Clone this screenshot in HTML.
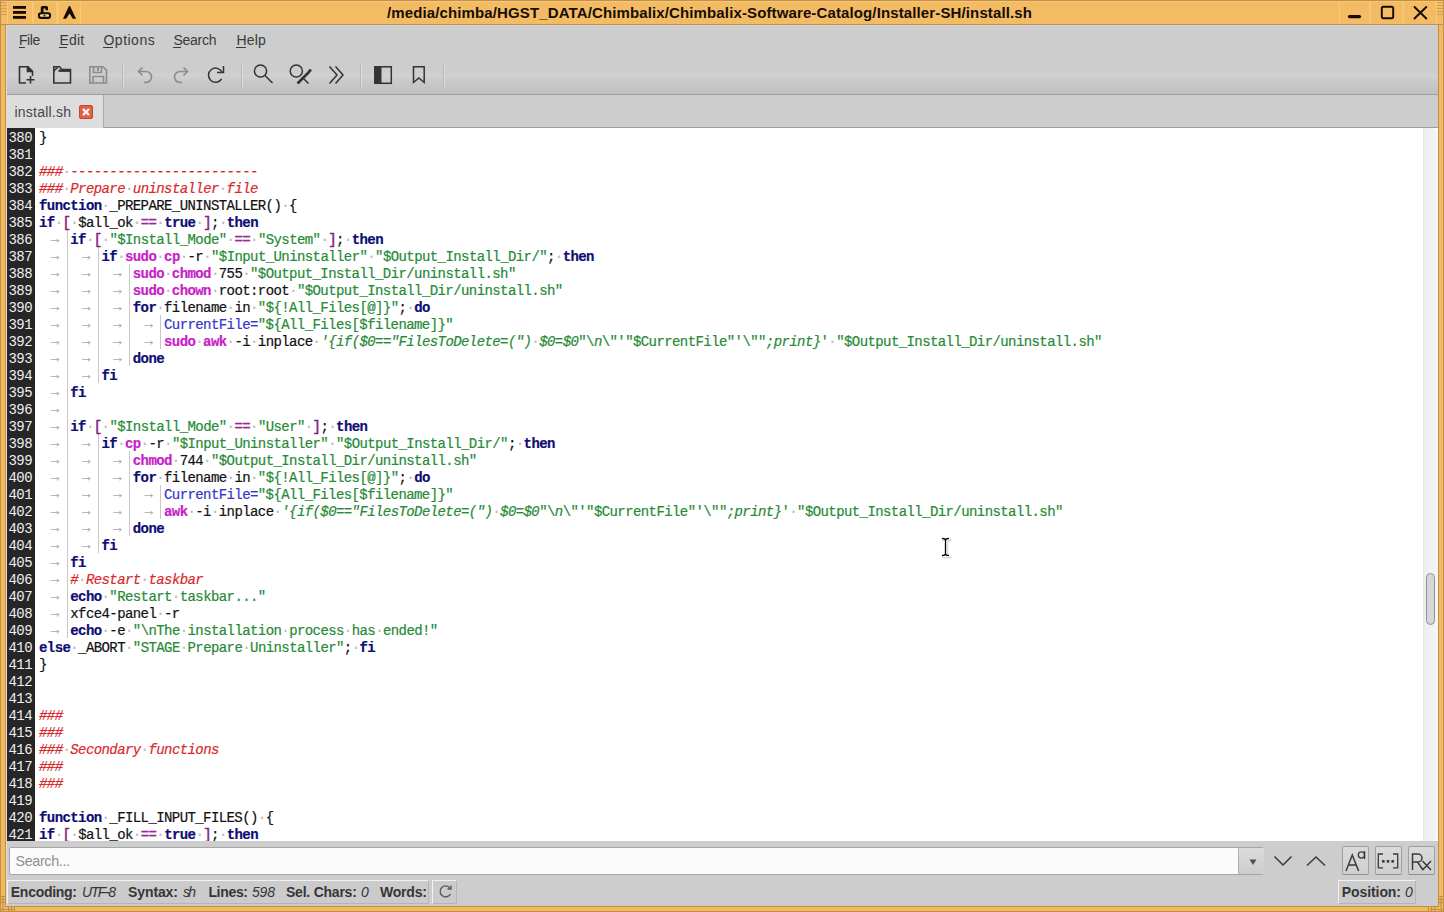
<!DOCTYPE html>
<html><head><meta charset="utf-8">
<style>
*{margin:0;padding:0;box-sizing:border-box}
html,body{width:1444px;height:912px;overflow:hidden;background:#f1b962;font-family:"Liberation Sans",sans-serif}
.abs{position:absolute}
#title{left:0;top:0;width:1444px;height:25px;background:#f2bb64;border-top:1px solid #b8862f;border-bottom:1px solid #c0913f}
#ttext{left:387px;top:4px;white-space:nowrap;font-weight:bold;font-size:15.3px;color:#140c05;}
#win{left:6px;top:25px;width:1432px;height:881px;background:#cdcdcd}
#menubar{left:6px;top:25px;width:1432px;height:30px;background:#cdcdcd}
.menu{position:absolute;top:32px;font-size:14px;letter-spacing:0.5px;color:#3a3a3a}
.menu u{text-decoration:none;border-bottom:1px solid #3a3a3a}
#toolbar{left:6px;top:55px;width:1432px;height:40px;background:linear-gradient(#cdcdcd 0,#cdcdcd 45%,#d1d1d1 50%,#c9c9c9 70%,#c0c0c0 100%);border-bottom:1px solid #9f9f9f}
.sep{position:absolute;top:63px;width:1px;height:25px;background:#bababa;box-shadow:1px 0 0 #dadada}
#tabbar{left:6px;top:95px;width:1432px;height:33px;background:#cdcdcd;border-bottom:1px solid #9c9c9c}
#tab{left:6px;top:95px;width:98px;height:33px;background:#dddddd;border-right:1px solid #a9a9a9}
#tabtxt{left:14px;top:102px;font-size:15px;letter-spacing:0.35px;color:#454545}
#tabx{left:79px;top:105px;width:14px;height:14px;background:#df6347;border-radius:2px;border:1px solid #c04a30}
#editor{left:6px;top:128px;width:1432px;height:713px;background:#fff}
#gutter{left:6px;top:128px;width:29px;height:713px;background:#262626}
.gn{position:absolute;margin-top:1.5px;left:6px;width:26px;text-align:right;height:17px;line-height:17px;font-family:"Liberation Mono",monospace;font-size:14px;letter-spacing:-0.5875px;color:#eee}
.ln{position:absolute;margin-top:1.5px;left:39px;height:17px;line-height:17px;white-space:pre;font-family:"Liberation Mono",monospace;font-size:14px;letter-spacing:-0.5875px;color:#111;-webkit-text-stroke:0.2px}
.tb{display:inline-block;width:31.25px;text-align:center;color:#aaa;position:relative;top:-1px}
.sp{color:#bbb}
.k{color:#0d0d73;font-weight:bold}
.c{color:#c81ec8;font-weight:bold}
.s{color:#268a36}
.si{color:#268a36;font-style:italic}
.m{color:#d82a2a;font-style:italic}
.p{color:#84207c;-webkit-text-stroke:0.5px}
.e{color:#9c2696;-webkit-text-stroke:0.4px}
.v{color:#3535c8}
.n{color:#111}
.gd{position:absolute;width:1px;background:#c8c8c8}
#vscroll{left:1423px;top:128px;width:15px;height:713px;background:linear-gradient(90deg,#e6e6e6 0,#e6e6e6 1px,#eceeee 1px,#eef2f2 40%,#f6eef6 60%,#f0f8f2 85%,#f8f8f8);border-radius:0 6px 6px 0}
#thumb{left:1426px;top:573px;width:9px;height:52px;border:1px solid #8c9496;border-radius:5px;background:#d9d5d9}
#searchbar{left:6px;top:841px;width:1432px;height:38px;background:#cdcdcd}
#sinput{left:9px;top:847px;width:1255px;height:28px;background:#fbfbfb;border:1px solid #a6a6a6;border-radius:2px}
#sdrop{left:1238px;top:848px;width:26px;height:26px;background:linear-gradient(#dcdcdc,#cdcdcd);border-left:1px solid #b0b0b0}
#sph{left:15px;top:852px;font-size:14.5px;letter-spacing:0.3px;color:#8c8c8c}
.btn{position:absolute;top:846px;width:27px;height:29px;border:1px solid #a0a0a0;border-bottom-color:#8e8e8e;border-radius:2px;background:linear-gradient(#dadada,#cfcfcf)}
#status{left:7px;top:880px;width:1422px;height:24px;background:#cdcdcd;border:1px solid #f4f4f4;border-right-color:#b9b9b9;border-bottom-color:#b9b9b9}
.panel{position:absolute;top:880px;height:24px;background:#cbcbcb;border:1px solid #f2f2f2;border-right-color:#b5b5b5;border-bottom-color:#b5b5b5}
.st{position:absolute;top:883px;font-size:14px;color:#353535;white-space:nowrap}
.st b{font-weight:bold;letter-spacing:0.3px}
.st i{font-style:italic}
.lb{position:absolute;white-space:nowrap}
.ul{position:absolute;top:47px;height:1px;background:#3a3a3a}
</style></head><body>
<div class="abs" id="title"></div>
<div class="abs" id="win"></div>
<div class="abs" id="menubar"></div>
<div class="abs" id="toolbar"></div>
<div class="sep" style="left:122px"></div>
<div class="sep" style="left:241px"></div>
<div class="sep" style="left:360px"></div>
<div class="sep" style="left:443px"></div>
<div class="abs" id="tabbar"></div>
<div class="abs" id="tab"></div>
<div class="abs" id="tabx"></div>
<div class="abs" id="editor"></div>
<div class="abs" id="gutter"></div>
<div class="gn" style="top:128px">380</div>
<div class="gn" style="top:145px">381</div>
<div class="gn" style="top:162px">382</div>
<div class="gn" style="top:179px">383</div>
<div class="gn" style="top:196px">384</div>
<div class="gn" style="top:213px">385</div>
<div class="gn" style="top:230px">386</div>
<div class="gn" style="top:247px">387</div>
<div class="gn" style="top:264px">388</div>
<div class="gn" style="top:281px">389</div>
<div class="gn" style="top:298px">390</div>
<div class="gn" style="top:315px">391</div>
<div class="gn" style="top:332px">392</div>
<div class="gn" style="top:349px">393</div>
<div class="gn" style="top:366px">394</div>
<div class="gn" style="top:383px">395</div>
<div class="gn" style="top:400px">396</div>
<div class="gn" style="top:417px">397</div>
<div class="gn" style="top:434px">398</div>
<div class="gn" style="top:451px">399</div>
<div class="gn" style="top:468px">400</div>
<div class="gn" style="top:485px">401</div>
<div class="gn" style="top:502px">402</div>
<div class="gn" style="top:519px">403</div>
<div class="gn" style="top:536px">404</div>
<div class="gn" style="top:553px">405</div>
<div class="gn" style="top:570px">406</div>
<div class="gn" style="top:587px">407</div>
<div class="gn" style="top:604px">408</div>
<div class="gn" style="top:621px">409</div>
<div class="gn" style="top:638px">410</div>
<div class="gn" style="top:655px">411</div>
<div class="gn" style="top:672px">412</div>
<div class="gn" style="top:689px">413</div>
<div class="gn" style="top:706px">414</div>
<div class="gn" style="top:723px">415</div>
<div class="gn" style="top:740px">416</div>
<div class="gn" style="top:757px">417</div>
<div class="gn" style="top:774px">418</div>
<div class="gn" style="top:791px">419</div>
<div class="gn" style="top:808px">420</div>
<div class="gn" style="top:825px">421</div>
<div class="gd" style="left:66.50px;top:230px;height:408px"></div>
<div class="gd" style="left:97.75px;top:247px;height:136px"></div>
<div class="gd" style="left:97.75px;top:434px;height:119px"></div>
<div class="gd" style="left:129.00px;top:264px;height:102px"></div>
<div class="gd" style="left:129.00px;top:451px;height:85px"></div>
<div class="gd" style="left:160.25px;top:315px;height:34px"></div>
<div class="gd" style="left:160.25px;top:485px;height:34px"></div>
<div class="ln" style="top:128px"><span class="n">}</span></div>
<div class="ln" style="top:145px"></div>
<div class="ln" style="top:162px"><span class="m">###</span><span class="sp">·</span><span class="m">------------------------</span></div>
<div class="ln" style="top:179px"><span class="m">###</span><span class="sp">·</span><span class="m">Prepare</span><span class="sp">·</span><span class="m">uninstaller</span><span class="sp">·</span><span class="m">file</span></div>
<div class="ln" style="top:196px"><span class="k">function</span><span class="sp">·</span><span class="n">_PREPARE_UNINSTALLER()</span><span class="sp">·</span><span class="n">{</span></div>
<div class="ln" style="top:213px"><span class="k">if</span><span class="sp">·</span><span class="p">[</span><span class="sp">·</span><span class="n">$all_ok</span><span class="sp">·</span><span class="e">==</span><span class="sp">·</span><span class="k">true</span><span class="sp">·</span><span class="p">]</span><span class="n">;</span><span class="sp">·</span><span class="k">then</span></div>
<div class="ln" style="top:230px"><span class="tb">→</span><span class="k">if</span><span class="sp">·</span><span class="p">[</span><span class="sp">·</span><span class="s">&quot;$Install_Mode&quot;</span><span class="sp">·</span><span class="e">==</span><span class="sp">·</span><span class="s">&quot;System&quot;</span><span class="sp">·</span><span class="p">]</span><span class="n">;</span><span class="sp">·</span><span class="k">then</span></div>
<div class="ln" style="top:247px"><span class="tb">→</span><span class="tb">→</span><span class="k">if</span><span class="sp">·</span><span class="c">sudo</span><span class="sp">·</span><span class="c">cp</span><span class="sp">·</span><span class="n">-r</span><span class="sp">·</span><span class="s">&quot;$Input_Uninstaller&quot;</span><span class="sp">·</span><span class="s">&quot;$Output_Install_Dir/&quot;</span><span class="n">;</span><span class="sp">·</span><span class="k">then</span></div>
<div class="ln" style="top:264px"><span class="tb">→</span><span class="tb">→</span><span class="tb">→</span><span class="c">sudo</span><span class="sp">·</span><span class="c">chmod</span><span class="sp">·</span><span class="n">755</span><span class="sp">·</span><span class="s">&quot;$Output_Install_Dir/uninstall.sh&quot;</span></div>
<div class="ln" style="top:281px"><span class="tb">→</span><span class="tb">→</span><span class="tb">→</span><span class="c">sudo</span><span class="sp">·</span><span class="c">chown</span><span class="sp">·</span><span class="n">root:root</span><span class="sp">·</span><span class="s">&quot;$Output_Install_Dir/uninstall.sh&quot;</span></div>
<div class="ln" style="top:298px"><span class="tb">→</span><span class="tb">→</span><span class="tb">→</span><span class="k">for</span><span class="sp">·</span><span class="n">filename</span><span class="sp">·</span><span class="n">in</span><span class="sp">·</span><span class="s">&quot;${!All_Files[@]}&quot;</span><span class="n">;</span><span class="sp">·</span><span class="k">do</span></div>
<div class="ln" style="top:315px"><span class="tb">→</span><span class="tb">→</span><span class="tb">→</span><span class="tb">→</span><span class="v">CurrentFile=</span><span class="s">&quot;${All_Files[$filename]}&quot;</span></div>
<div class="ln" style="top:332px"><span class="tb">→</span><span class="tb">→</span><span class="tb">→</span><span class="tb">→</span><span class="c">sudo</span><span class="sp">·</span><span class="c">awk</span><span class="sp">·</span><span class="n">-i</span><span class="sp">·</span><span class="n">inplace</span><span class="sp">·</span><span class="si">&#x27;{if($0==&quot;FilesToDelete=(&quot;)</span><span class="sp">·</span><span class="si">$0=$0</span><span class="s">&quot;\</span><span class="si">n</span><span class="s">\&quot;&#x27;&quot;$CurrentFile&quot;&#x27;\&quot;&quot;</span><span class="si">;print}</span><span class="s">&#x27;</span><span class="sp">·</span><span class="s">&quot;$Output_Install_Dir/uninstall.sh&quot;</span></div>
<div class="ln" style="top:349px"><span class="tb">→</span><span class="tb">→</span><span class="tb">→</span><span class="k">done</span></div>
<div class="ln" style="top:366px"><span class="tb">→</span><span class="tb">→</span><span class="k">fi</span></div>
<div class="ln" style="top:383px"><span class="tb">→</span><span class="k">fi</span></div>
<div class="ln" style="top:400px"><span class="tb">→</span></div>
<div class="ln" style="top:417px"><span class="tb">→</span><span class="k">if</span><span class="sp">·</span><span class="p">[</span><span class="sp">·</span><span class="s">&quot;$Install_Mode&quot;</span><span class="sp">·</span><span class="e">==</span><span class="sp">·</span><span class="s">&quot;User&quot;</span><span class="sp">·</span><span class="p">]</span><span class="n">;</span><span class="sp">·</span><span class="k">then</span></div>
<div class="ln" style="top:434px"><span class="tb">→</span><span class="tb">→</span><span class="k">if</span><span class="sp">·</span><span class="c">cp</span><span class="sp">·</span><span class="n">-r</span><span class="sp">·</span><span class="s">&quot;$Input_Uninstaller&quot;</span><span class="sp">·</span><span class="s">&quot;$Output_Install_Dir/&quot;</span><span class="n">;</span><span class="sp">·</span><span class="k">then</span></div>
<div class="ln" style="top:451px"><span class="tb">→</span><span class="tb">→</span><span class="tb">→</span><span class="c">chmod</span><span class="sp">·</span><span class="n">744</span><span class="sp">·</span><span class="s">&quot;$Output_Install_Dir/uninstall.sh&quot;</span></div>
<div class="ln" style="top:468px"><span class="tb">→</span><span class="tb">→</span><span class="tb">→</span><span class="k">for</span><span class="sp">·</span><span class="n">filename</span><span class="sp">·</span><span class="n">in</span><span class="sp">·</span><span class="s">&quot;${!All_Files[@]}&quot;</span><span class="n">;</span><span class="sp">·</span><span class="k">do</span></div>
<div class="ln" style="top:485px"><span class="tb">→</span><span class="tb">→</span><span class="tb">→</span><span class="tb">→</span><span class="v">CurrentFile=</span><span class="s">&quot;${All_Files[$filename]}&quot;</span></div>
<div class="ln" style="top:502px"><span class="tb">→</span><span class="tb">→</span><span class="tb">→</span><span class="tb">→</span><span class="c">awk</span><span class="sp">·</span><span class="n">-i</span><span class="sp">·</span><span class="n">inplace</span><span class="sp">·</span><span class="si">&#x27;{if($0==&quot;FilesToDelete=(&quot;)</span><span class="sp">·</span><span class="si">$0=$0</span><span class="s">&quot;\</span><span class="si">n</span><span class="s">\&quot;&#x27;&quot;$CurrentFile&quot;&#x27;\&quot;&quot;</span><span class="si">;print}</span><span class="s">&#x27;</span><span class="sp">·</span><span class="s">&quot;$Output_Install_Dir/uninstall.sh&quot;</span></div>
<div class="ln" style="top:519px"><span class="tb">→</span><span class="tb">→</span><span class="tb">→</span><span class="k">done</span></div>
<div class="ln" style="top:536px"><span class="tb">→</span><span class="tb">→</span><span class="k">fi</span></div>
<div class="ln" style="top:553px"><span class="tb">→</span><span class="k">fi</span></div>
<div class="ln" style="top:570px"><span class="tb">→</span><span class="m">#</span><span class="sp">·</span><span class="m">Restart</span><span class="sp">·</span><span class="m">taskbar</span></div>
<div class="ln" style="top:587px"><span class="tb">→</span><span class="k">echo</span><span class="sp">·</span><span class="s">&quot;Restart</span><span class="sp">·</span><span class="s">taskbar...&quot;</span></div>
<div class="ln" style="top:604px"><span class="tb">→</span><span class="n">xfce4-panel</span><span class="sp">·</span><span class="n">-r</span></div>
<div class="ln" style="top:621px"><span class="tb">→</span><span class="k">echo</span><span class="sp">·</span><span class="n">-e</span><span class="sp">·</span><span class="s">&quot;\nThe</span><span class="sp">·</span><span class="s">installation</span><span class="sp">·</span><span class="s">process</span><span class="sp">·</span><span class="s">has</span><span class="sp">·</span><span class="s">ended!&quot;</span></div>
<div class="ln" style="top:638px"><span class="k">else</span><span class="sp">·</span><span class="n">_ABORT</span><span class="sp">·</span><span class="s">&quot;STAGE</span><span class="sp">·</span><span class="s">Prepare</span><span class="sp">·</span><span class="s">Uninstaller&quot;</span><span class="n">;</span><span class="sp">·</span><span class="k">fi</span></div>
<div class="ln" style="top:655px"><span class="n">}</span></div>
<div class="ln" style="top:672px"></div>
<div class="ln" style="top:689px"></div>
<div class="ln" style="top:706px"><span class="m">###</span></div>
<div class="ln" style="top:723px"><span class="m">###</span></div>
<div class="ln" style="top:740px"><span class="m">###</span><span class="sp">·</span><span class="m">Secondary</span><span class="sp">·</span><span class="m">functions</span></div>
<div class="ln" style="top:757px"><span class="m">###</span></div>
<div class="ln" style="top:774px"><span class="m">###</span></div>
<div class="ln" style="top:791px"></div>
<div class="ln" style="top:808px"><span class="k">function</span><span class="sp">·</span><span class="n">_FILL_INPUT_FILES()</span><span class="sp">·</span><span class="n">{</span></div>
<div class="ln" style="top:825px"><span class="k">if</span><span class="sp">·</span><span class="p">[</span><span class="sp">·</span><span class="n">$all_ok</span><span class="sp">·</span><span class="e">==</span><span class="sp">·</span><span class="k">true</span><span class="sp">·</span><span class="p">]</span><span class="n">;</span><span class="sp">·</span><span class="k">then</span></div>
<div class="abs" id="vscroll"></div>
<div class="abs" id="thumb"></div>
<div class="abs" id="searchbar"></div>
<div class="abs" id="sinput"></div>
<div class="abs" id="sdrop"></div>
<div class="btn" style="left:1342px"></div>
<div class="btn" style="left:1375px"></div>
<div class="btn" style="left:1408px"></div>
<div class="panel" style="left:7px;width:422px"></div>
<div class="panel" style="left:432px;width:25px"></div>
<div class="panel" style="left:1338px;width:78px"></div>
<svg class="abs" style="left:0;top:0" width="1444" height="912" viewBox="0 0 1444 912">
 <!-- window border lines -->
 <g fill="#c19045">
  <rect x="0" y="0" width="1444" height="1"/>
  <rect x="0" y="0" width="1" height="912"/>
  <rect x="1443" y="0" width="1" height="912"/>
  <rect x="0" y="911" width="1444" height="1"/>
  <rect x="5" y="24" width="1" height="882"/>
  <rect x="1438" y="24" width="1" height="882"/>
  <rect x="5" y="906" width="1434" height="1"/>
  <rect x="0" y="24" width="1444" height="1"/>
 </g>
 <rect x="6" y="25" width="1" height="881" fill="#e3dccf"/>
 <rect x="1" y="1" width="1442" height="1" fill="#f6c87c"/>
 <rect x="6" y="25" width="1432" height="1" fill="#ddd3c8"/>
 <rect x="0" y="24" width="1444" height="1" fill="#b39263"/>
 <!-- title bar button separators -->
 <g fill="#f7ca7e">
  <rect x="7" y="1" width="1" height="23"/><rect x="32" y="1" width="1.5" height="23"/><rect x="56.5" y="1" width="2" height="23"/><rect x="80" y="1" width="1" height="23"/>
  <rect x="1339" y="1" width="1" height="23"/><rect x="1369" y="1" width="1.5" height="23"/><rect x="1402.5" y="1" width="1.5" height="23"/><rect x="1436" y="1" width="1" height="23"/>
 </g>
 <g fill="#cf9f52">
  <rect x="1" y="2" width="6" height="1"/><rect x="1" y="5" width="6" height="1"/><rect x="1" y="8" width="6" height="1"/><rect x="1" y="11" width="6" height="1"/><rect x="1" y="14" width="6" height="1"/>
  <rect x="1437" y="2" width="6" height="1"/><rect x="1437" y="5" width="6" height="1"/><rect x="1437" y="8" width="6" height="1"/><rect x="1437" y="11" width="6" height="1"/><rect x="1437" y="14" width="6" height="1"/>
 </g>
 <!-- corner grips -->
 <g fill="#c18f42">
  <rect x="1" y="896" width="4" height="1"/><rect x="1" y="899" width="4" height="1"/><rect x="1" y="902" width="4" height="1"/><rect x="1" y="909" width="13" height="1"/>
  <rect x="2.5" y="896" width="1" height="15"/><rect x="8" y="906" width="1" height="5"/><rect x="11" y="906" width="1" height="5"/><rect x="14" y="906" width="1" height="5"/>
  <rect x="1439" y="896" width="4" height="1"/><rect x="1439" y="899" width="4" height="1"/><rect x="1439" y="902" width="4" height="1"/><rect x="1430" y="909" width="13" height="1"/>
  <rect x="1440.5" y="896" width="1" height="15"/><rect x="1428" y="906" width="1" height="5"/><rect x="1431" y="906" width="1" height="5"/><rect x="1434.5" y="906" width="1" height="5"/>
 </g>
 <!-- title bar buttons -->
 <g fill="#140a02">
  <rect x="13" y="6" width="13" height="2.8"/>
  <rect x="13" y="11" width="13" height="2.8"/>
  <rect x="13" y="16" width="13" height="2.8"/>
  <path d="M40.8 13 V7.5 Q40.8 6 42.3 6 H46.5 Q48 6 48 7.5 V10.3 H45.5 V8.5 H43.5 V13 Z"/>
  <path d="M69 6 H70 L76 18.7 H72.8 L69.5 13.5 L66.2 18.7 H63 Z"/>
 </g>
 <rect x="39" y="13.3" width="11" height="4.6" rx="1.8" fill="#e6dc98" stroke="#140a02" stroke-width="2.1"/>
 <circle cx="44.5" cy="15.6" r="0.9" fill="#140a02"/>
 <g stroke="#140a02" fill="none" stroke-width="1.9">
  <path d="M1349.5 16.6 H1359.5" stroke-width="3.2" stroke-linecap="round"/>
  <rect x="1381.8" y="6.8" width="11.4" height="11.4" rx="1.6"/>
  <path d="M1414.5 7 L1426.3 18.5 M1426.3 7 L1414.5 18.5" stroke-linecap="round"/>
 </g>
 <!-- toolbar icons -->
 <g stroke="#333" fill="none" stroke-width="1.6">
  <path d="M26 83 H19.5 V66.8 H28 L32.5 71.3 V76"/>
  <path d="M27.5 66.8 V71.5 H32.5" fill="#333"/>
  <path d="M30.5 76 V83.5 M26.5 79.8 H34.5"/>
  <path d="M53.8 83 V66.8 H59.5 L62 69.5 H70.5 V83 Z"/>
  <path d="M58.5 70.7 H70.5" stroke-width="2.4"/>
  <path d="M53.8 71 L57.5 67.5"/>
 </g>
 <g stroke="#8c8c8c" fill="none" stroke-width="1.6">
  <path d="M89.8 83 V66.8 H103 L106.5 70.3 V83 Z"/>
  <path d="M93.5 66.8 V72.5 H101.5 V66.8"/>
  <path d="M93 83 V76.5 H103.5 V83"/>
  <path d="M139 71.5 H146 A5.5 5.5 0 0 1 146 82.5 H144"/>
  <path d="M142.5 67.5 L138.5 71.5 L142.5 75.5"/>
  <path d="M187 71.5 H180 A5.5 5.5 0 0 0 180 82.5 H182"/>
  <path d="M183.5 67.5 L187.5 71.5 L183.5 75.5"/>
 </g>
 <rect x="97" y="67.5" width="2" height="3.5" fill="#8c8c8c"/>
 <g stroke="#333" fill="none" stroke-width="1.5">
  <path d="M222 72.2 A7.1 7.1 0 1 0 221.6 79"/>
  <path d="M223.5 66 V72.6 H217"/>
  <circle cx="260.5" cy="71" r="6.1"/>
  <path d="M265 75.5 L272.5 83"/>
  <circle cx="296.3" cy="71" r="6.1"/>
  <path d="M302 77 L308.5 83.5"/>
  <path d="M297.5 83.5 L309.5 71.5" stroke-width="2.6"/>
  <path d="M329.5 66.5 L337 75 L329.5 83.5 M335.5 66.5 L343 75 L335.5 83.5"/>
  <rect x="374.8" y="66.8" width="16.5" height="16.5"/>
  <path d="M413.5 66.8 H424.2 V82.5 L418.8 78 L413.5 82.5 Z"/>
 </g>
 <circle cx="310" cy="70.5" r="1.6" fill="#333"/>
 <rect x="375" y="67" width="6.5" height="16" fill="#333"/>
 <!-- tab close x -->
 <path d="M83 109 L89 115 M89 109 L83 115" stroke="#fff" stroke-width="2.2"/>
 <!-- search bar icons -->
 <path d="M1249.5 859.5 H1256.5 L1253 865 Z" fill="#505050"/>
 <g stroke="#3a3a3a" fill="none" stroke-width="1.5">
  <path d="M1274.5 856.5 L1283 865 L1291.5 856.5"/>
  <path d="M1307 865.5 L1316 857 L1325 865.5"/>
  <path d="M1346 871 L1352.3 855 L1358.6 871 M1348.5 865 H1356"/>
  <path d="M1412.5 870 V854 H1418 A4 4 0 0 1 1418 862 H1412.5 M1417.5 862 L1423 870 M1422.5 861 L1431 870 M1431 861 L1422.5 870"/>
 </g>
 <g stroke="#3a3a3a" fill="none" stroke-width="1.3">
  <path d="M1383 854 H1378.3 V867.8 H1383 M1393 854 H1397.7 V867.8 H1393"/>
  <circle cx="1361.4" cy="855" r="3.1"/>
  <path d="M1364.6 851 V859"/>
 </g>
 <g fill="#3a3a3a"><rect x="1382" y="860" width="2.6" height="2.6"/><rect x="1386.7" y="860" width="2.6" height="2.6"/><rect x="1391.4" y="860" width="2.6" height="2.6"/></g>
 <!-- status refresh -->
 <path d="M450 888 A5.5 5.5 0 1 0 450.5 894" stroke="#555" fill="none" stroke-width="1.3"/>
 <path d="M451 885.5 V889 H447.5" stroke="#555" fill="none" stroke-width="1.3"/>
 <!-- I-beam cursor -->
 <g fill="none" stroke-linecap="round">
  <path d="M943.5 540 H950 M946.8 540 V557 M943.5 557 H950" stroke="#bbb" stroke-width="3" opacity="0.6"/>
  <path d="M942.2 538.5 H948.8 M945.5 538.5 V555.5 M942.2 555.5 H948.8" stroke="#fff" stroke-width="3.4"/>
  <path d="M942.5 538.5 Q945.5 538.5 945.5 540.5 Q945.5 538.5 948.5 538.5 M945.5 540 V554 M942.5 555.5 Q945.5 555.5 945.5 553.5 Q945.5 555.5 948.5 555.5" stroke="#000" stroke-width="1.3"/>
 </g>
</svg>
<div class="lb" style="left:387.00px;top:5.00px;font-size:15px;line-height:15px;letter-spacing:0.125px;color:#160d04;font-weight:bold;">/media/chimba/HGST_DATA/Chimbalix/Chimbalix-Software-Catalog/Installer-SH/install.sh</div>
<div class="lb" style="left:19.00px;top:32.95px;font-size:14px;line-height:14px;letter-spacing:-0.433px;color:#3a3a3a;">File</div>
<div class="lb" style="left:59.50px;top:32.95px;font-size:14px;line-height:14px;letter-spacing:0.133px;color:#3a3a3a;">Edit</div>
<div class="lb" style="left:103.50px;top:32.95px;font-size:14px;line-height:14px;letter-spacing:0.483px;color:#3a3a3a;">Options</div>
<div class="lb" style="left:173.50px;top:32.95px;font-size:14px;line-height:14px;letter-spacing:-0.280px;color:#3a3a3a;">Search</div>
<div class="lb" style="left:236.50px;top:32.95px;font-size:14px;line-height:14px;letter-spacing:0.167px;color:#3a3a3a;">Help</div>
<div class="lb" style="left:14.50px;top:104.95px;font-size:14px;line-height:14px;letter-spacing:0.222px;color:#474747;">install.sh</div>
<div class="lb" style="left:15.50px;top:853.50px;font-size:14.3px;line-height:14.3px;letter-spacing:-0.338px;color:#8e8e8e;">Search...</div>
<div class="lb" style="left:10.80px;top:884.95px;font-size:14px;line-height:14px;letter-spacing:-0.275px;color:#363636;font-weight:bold;">Encoding:</div>
<div class="lb" style="left:82.00px;top:884.95px;font-size:14px;line-height:14px;letter-spacing:-1.425px;color:#363636;font-style:italic;">UTF-8</div>
<div class="lb" style="left:128.00px;top:884.95px;font-size:14px;line-height:14px;letter-spacing:-0.100px;color:#363636;font-weight:bold;">Syntax:</div>
<div class="lb" style="left:183.00px;top:884.95px;font-size:14px;line-height:14px;letter-spacing:-1.800px;color:#363636;font-style:italic;">sh</div>
<div class="lb" style="left:208.40px;top:884.95px;font-size:14px;line-height:14px;letter-spacing:-0.320px;color:#363636;font-weight:bold;">Lines:</div>
<div class="lb" style="left:252.00px;top:884.95px;font-size:14px;line-height:14px;letter-spacing:-0.200px;color:#363636;font-style:italic;">598</div>
<div class="lb" style="left:286.00px;top:884.95px;font-size:14px;line-height:14px;letter-spacing:-0.230px;color:#363636;font-weight:bold;">Sel. Chars:</div>
<div class="lb" style="left:361.00px;top:884.95px;font-size:14px;line-height:14px;letter-spacing:0.000px;color:#363636;font-style:italic;">0</div>
<div class="lb" style="left:380.00px;top:884.95px;font-size:14px;line-height:14px;letter-spacing:-0.200px;color:#363636;font-weight:bold;">Words:</div>
<div class="lb" style="left:1341.80px;top:884.95px;font-size:14px;line-height:14px;letter-spacing:-0.087px;color:#363636;font-weight:bold;">Position:</div>
<div class="lb" style="left:1405.00px;top:884.95px;font-size:14px;line-height:14px;letter-spacing:0.000px;color:#363636;font-style:italic;">0</div>
<div class="ul" style="left:18.5px;width:6.5px"></div><div class="ul" style="left:59.2px;width:7.7px"></div><div class="ul" style="left:103.2px;width:9.8px"></div><div class="ul" style="left:173.3px;width:7.7px"></div><div class="ul" style="left:236.2px;width:9.6px"></div>
</body></html>
